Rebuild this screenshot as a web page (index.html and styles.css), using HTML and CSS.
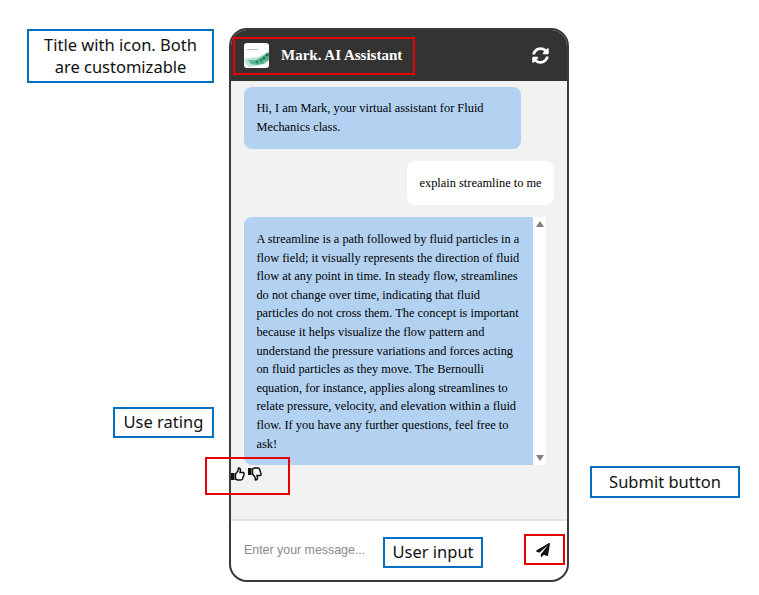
FILE: index.html
```html
<!DOCTYPE html>
<html lang="en">
<head>
  <meta charset="UTF-8">
  <meta name="viewport" content="width=device-width, initial-scale=1.0">
  <title>Mark. AI Assistant</title>
  <link rel="stylesheet" href="styles.css">
</head>
<body>

  <div class="chat">
    <div class="chat-header">
      <div class="title">
        <svg class="logo" viewBox="0 0 25 25">
          <rect width="25" height="25" rx="3" fill="#fff"/>
          <rect x="3" y="6" width="11" height="1" fill="#bbb"/>
          <path d="M0 16 L6 15 L14 14 L25 8 V14 L19 20 L12 23 L5 24 L1 20 Z" fill="#bfe3d2"/>
          <path d="M4 17 L12 17 L16 15 L25 9 V17 L20 21 L13 22 L7 21 Z" fill="#5cb893"/>
          <circle cx="13" cy="19" r="1.5" fill="#2c8a63"/>
          <circle cx="17" cy="17" r="1.6" fill="#2c8a63"/>
          <circle cx="20" cy="15" r="1.5" fill="#1d6d4c"/>
          <circle cx="23" cy="12" r="1.6" fill="#1d6d4c"/>
          <circle cx="21" cy="19" r="1" fill="#8fcfb3"/>
        </svg>
        <span class="title-text">Mark. AI Assistant</span>
      </div>
      <svg class="refresh" viewBox="0 0 512 512"><path fill="#fff" d="M370.72 133.28C339.458 104.008 298.888 87.962 255.848 88c-77.458.068-144.328 53.178-162.791 126.85-1.344 5.363-6.122 9.15-11.651 9.15H24.103c-7.498 0-13.194-6.807-11.807-14.176C33.933 94.924 134.813 8 256 8c66.448 0 126.791 26.136 171.315 68.685L463.03 40.97C478.149 25.851 504 36.559 504 57.941V192c0 13.255-10.745 24-24 24H345.941c-21.382 0-32.09-25.851-16.971-40.971l41.75-41.749zM32 296h134.059c21.382 0 32.09 25.851 16.971 40.971l-41.75 41.75c31.262 29.273 71.835 45.319 114.876 45.28 77.418-.07 144.315-53.144 162.787-126.849 1.344-5.363 6.122-9.15 11.651-9.15h57.304c7.498 0 13.194 6.807 11.807 14.176C478.067 417.076 377.187 504 256 504c-66.448 0-126.791-26.136-171.315-68.685L48.97 471.03C33.851 486.149 8 475.441 8 454.059V320c0-13.255 10.745-24 24-24z"/></svg>
    </div>

    <div class="messages">
      <div class="msg bot-msg first-msg">Hi, I am Mark, your virtual assistant for Fluid Mechanics class.</div>
      <div class="msg user-msg">explain streamline to me</div>
      <div class="long-msg">
        <div class="msg bot-msg long-text">A streamline is a path followed by fluid particles in a flow field; it visually represents the direction of fluid flow at any point in time. In steady flow, streamlines do not change over time, indicating that fluid particles do not cross them. The concept is important because it helps visualize the flow pattern and understand the pressure variations and forces acting on fluid particles as they move. The Bernoulli equation, for instance, applies along streamlines to relate pressure, velocity, and elevation within a fluid flow. If you have any further questions, feel free to ask!</div>
        <div class="scrollbar">
          <span class="arrow-up"></span>
          <span class="arrow-down"></span>
        </div>
      </div>
      <div class="rating">
        <svg class="thumb" viewBox="0 0 14 14">
          <rect x="0" y="6" width="3.5" height="7" fill="#111"/>
          <path d="M4.5 7 L7 4 L7.5 1 Q9.5 1 9.5 3.5 L9 5.5 H12.5 Q13.5 6.5 12.8 8 L11.5 12 Q11 13 9.5 13 H6.5 L4.5 12 Z" fill="#fff" stroke="#111" stroke-width="1.5"/>
        </svg>
        <svg class="thumb" viewBox="0 0 14 14">
          <rect x="0" y="1" width="3.5" height="7" fill="#111"/>
          <path d="M4.5 7 L7 10 L7.5 13 Q9.5 13 9.5 10.5 L9 8.5 H12.5 Q13.5 7.5 12.8 6 L11.5 2 Q11 1 9.5 1 H6.5 L4.5 2 Z" fill="#fff" stroke="#111" stroke-width="1.5"/>
        </svg>
      </div>
    </div>

    <div class="chat-footer">
      <input class="msg-input" type="text" placeholder="Enter your message...">
      <svg class="send" viewBox="0 0 512 512"><path fill="#111" d="M476 3.2L12.5 270.6c-18.1 10.4-15.8 35.6 2.2 43.2L121 358.4l287.3-253.2c5.5-4.9 13.3 2.6 8.6 8.3L176 407v80.5c0 23.6 28.5 32.9 42.5 15.8L282 426l124.6 52.2c14.2 6 30.4-2.9 33-18.2l72-432C515 7.8 493.3-6.8 476 3.2z"/></svg>
    </div>
  </div>

  <!-- annotations on top of the screenshot -->
  <div class="note note-title">Title with icon. Both are customizable</div>
  <div class="note note-rating">Use rating</div>
  <div class="note note-input">User input</div>
  <div class="note note-submit">Submit button</div>
  <div class="mark mark-title"></div>
  <div class="mark mark-rating"></div>
  <div class="mark mark-submit"></div>

</body>
</html>
```

FILE: styles.css
```css
* {
  margin: 0;
  padding: 0;
  box-sizing: border-box;
}

body {
  position: relative;
  height: 595px;
  overflow: hidden;
  background: #fff;
  padding: 28px 0 0 229px;
}

.chat {
  display: flex;
  flex-direction: column;
  width: 340px;
  height: 554px;
  border: 2px solid #3a3a3a;
  border-radius: 18px;
  overflow: hidden;
  background: #fff;
}

.chat-header {
  display: flex;
  justify-content: space-between;
  align-items: center;
  height: 51px;
  padding: 0 18px 0 13px;
  background: #333;
}

.title {
  display: flex;
  align-items: center;
  gap: 12px;
}

.logo {
  width: 25px;
  height: 25px;
}

.title-text {
  font-family: "Liberation Serif", serif;
  font-size: 15px;
  font-weight: bold;
  color: #fff;
}

.refresh {
  width: 17px;
  height: 17px;
}

.messages {
  display: flex;
  flex-direction: column;
  flex: 1;
  padding: 6px 13px 0;
  background: #f2f2f2;
  border-bottom: 2px solid #e2e2e2;
}

.msg {
  font-family: "Liberation Serif", serif;
  font-size: 12.4px;
  line-height: 18.6px;
  color: #000;
  padding: 12.4px;
  border-radius: 8px;
}

.bot-msg {
  background: #b3d2f2;
}

.first-msg {
  width: 277px;
}

.user-msg {
  align-self: flex-end;
  height: 44px;
  margin-top: 12px;
  padding-top: 13.4px;
  background: #fff;
}

.long-msg {
  display: flex;
  height: 248px;
  width: 302px;
  margin-top: 12px;
}

.long-text {
  width: 289px;
  padding-top: 13px;
  border-radius: 8px 0 0 8px;
}

.scrollbar {
  display: flex;
  flex-direction: column;
  justify-content: space-between;
  align-items: center;
  width: 13px;
  padding: 4px 0;
  background: #fff;
}

.arrow-up {
  border-left: 4px solid transparent;
  border-right: 4px solid transparent;
  border-bottom: 6px solid #7f7f7f;
}

.arrow-down {
  border-left: 4px solid transparent;
  border-right: 4px solid transparent;
  border-top: 6px solid #7f7f7f;
}

.rating {
  display: flex;
  gap: 3px;
  margin: 2px 0 0 -13px;
}

.thumb {
  width: 14px;
  height: 14px;
}

.chat-footer {
  display: flex;
  justify-content: space-between;
  align-items: center;
  height: 59px;
  padding: 0 17px 2px 13px;
}

.msg-input {
  width: 200px;
  border: none;
  outline: none;
  background: none;
  font-family: "Liberation Sans", sans-serif;
  font-size: 12.4px;
}

.msg-input::placeholder {
  color: #8a8a8a;
}

.send {
  width: 14px;
  height: 14px;
}

.note {
  position: absolute;
  display: flex;
  align-items: center;
  justify-content: center;
  border: 2px solid #0070c0;
  background: #fff;
  font-family: "Noto Sans", sans-serif;
  font-size: 16.5px;
  line-height: 22px;
  text-align: center;
  color: #111;
  padding-bottom: 2px;
}

.note-title {
  left: 27px;
  top: 29px;
  width: 187px;
  height: 54px;
  padding: 0 10px;
}

.note-rating {
  left: 113px;
  top: 407px;
  width: 101px;
  height: 31px;
}

.note-input {
  left: 383px;
  top: 537px;
  width: 100px;
  height: 31px;
}

.note-submit {
  left: 590px;
  top: 466px;
  width: 150px;
  height: 32px;
  padding-bottom: 0;
}

.mark {
  position: absolute;
  border: 2px solid #e60000;
}

.mark-title {
  left: 233px;
  top: 37px;
  width: 182px;
  height: 38px;
}

.mark-rating {
  left: 205px;
  top: 457px;
  width: 85px;
  height: 38px;
}

.mark-submit {
  left: 524px;
  top: 534px;
  width: 41px;
  height: 31px;
}
```
